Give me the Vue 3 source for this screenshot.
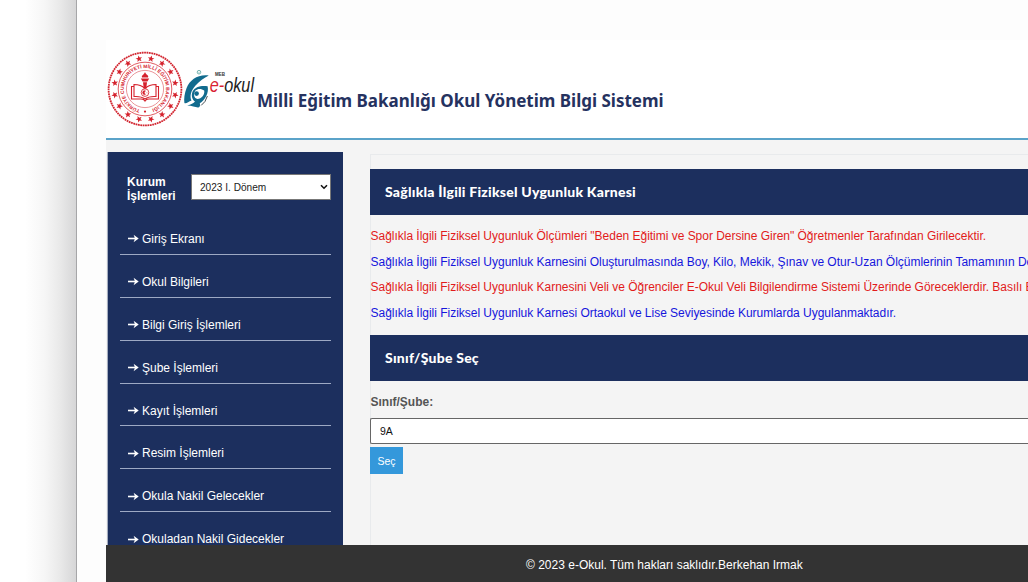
<script setup>
const menu = ['Giriş Ekranı', 'Okul Bilgileri', 'Bilgi Giriş İşlemleri', 'Şube İşlemleri', 'Kayıt İşlemleri', 'Resim İşlemleri', 'Okula Nakil Gelecekler', 'Okuladan Nakil Gidecekler']
const notes = [
  'Sağlıkla İlgili Fiziksel Uygunluk Ölçümleri "Beden Eğitimi ve Spor Dersine Giren" Öğretmenler Tarafından Girilecektir.',
  'Sağlıkla İlgili Fiziksel Uygunluk Karnesini Oluşturulmasında Boy, Kilo, Mekik, Şınav ve Otur-Uzan Ölçümlerinin Tamamının De',
  'Sağlıkla İlgili Fiziksel Uygunluk Karnesini Veli ve Öğrenciler E-Okul Veli Bilgilendirme Sistemi Üzerinde Göreceklerdir. Basılı E',
  'Sağlıkla İlgili Fiziksel Uygunluk Karnesi Ortaokul ve Lise Seviyesinde Kurumlarda Uygulanmaktadır.'
]
const stars = Array.from({ length: 16 }, (_, i) => i * 22.5 + 11.25)
</script>

<template>
  <div class="screen">
    <div class="shade"></div>
    <div class="frame">
      <div class="page">
        <header class="header">
          <svg class="seal" width="76" height="76" viewBox="-38 -38 76 76">
            <circle r="36.4" fill="#fff" stroke="#d22630" stroke-width="1.8" stroke-dasharray="1.8 .6" />
            <circle r="26.8" fill="none" stroke="#dc4850" stroke-width=".9" />
            <circle r="18.6" fill="none" stroke="#e0696f" stroke-width=".7" />
            <polygon v-for="a in stars" :key="a" :transform="`rotate(${a}) translate(0 -30.8)`" points="0,-3.4 .9,-1.1 3.3,-1 1.4,.5 2.1,2.8 0,1.5 -2.1,2.8 -1.4,.5 -3.3,-1 -.9,-1.1" fill="#d5222d" />
            <defs><path id="ring" d="M-5,20.5 A21.1,21.1 0 1 1 5,20.5" /></defs>
            <text class="ring"><textPath href="#ring" textLength="120">TÜRKİYE CUMHURİYETİ MİLLÎ EĞİTİM BAKANLIĞI</textPath></text>
            <circle cy="22.6" r="1.1" fill="#d5222d" />
            <g fill="#fff" stroke="#d5222d" stroke-width="1.1">
              <path d="M-13.5,-2.5 L-9,-2.5 Q-3,-2.5 0,0 Q3,-2.5 9,-2.5 L13.5,-2.5 V10 H4 Q1,10 0,12 Q-1,10 -4,10 H-13.5 Z" />
              <path d="M-11,-4.5 Q-4,-4.5 0,-.5 Q4,-4.5 11,-4.5 V7.5 Q4,7 0,10 Q-4,7 -11,7.5 Z" />
            </g>
            <path d="M-4.2,-10.5 H4.2 L2.4,-7.5 H-2.4 Z M-2,-6.7 H2 L1.2,0 H-1.2 Z" fill="#d5222d" />
            <path d="M0,-17 C-1,-14 -3.7,-14 -3,-11.5 H3 C4.2,-14 .8,-14 0,-17 Z" fill="#d5222d" />
            <circle cy="3.6" r="3.8" fill="#fff" stroke="#d5222d" stroke-width=".8" /><path d="M.6,1.9 A2,2 0 1 0 .6,5.3 A1.8,1.8 0 0 1 .6,1.9 M1.8,3 L2.1,4.4" fill="#d5222d" stroke="#d5222d" stroke-width=".4" />
          </svg>
          <svg class="eokul" width="74" height="42" viewBox="0 0 74 42">
            <circle cx="15" cy="4.2" r="1.8" fill="none" stroke="#65aaa6" stroke-width=".9" /><circle cx="15" cy="4.2" r=".5" fill="#65aaa6" />
            <path d="M24.8,7.4 C14,6 6,11.5 2.6,20 C.5,25.5 -.2,31 .4,35 C2,36.2 4.5,33.6 7.5,32.6 C5.4,28 7,22.5 11.5,17.4 C15.5,13 20,10 24.8,7.4 Z" fill="#116b8e" />
            <path d="M8.6,23.5 C11,18.8 17,17.2 23.6,18.2 C25.2,25 21,32 15.8,35.2 C16.6,37.6 15.6,39.4 14,39.4 C11,39.4 8,37.6 3.2,37.6 C7,36.8 9.6,35.2 11,33.6 C8,31.6 7,27.4 8.6,23.5 Z M11.4,22.6 C9,26.5 10,30.6 13.4,31 C17.6,31 21,26.8 20.2,22.6 C17.6,20.4 13.4,20.4 11.4,22.6 Z" fill="#116b8e" fill-rule="evenodd" />
            <circle cx="12.6" cy="25.6" r="2.3" fill="#116b8e" />
            <path d="M17.2,37.4 Q21.6,34.4 23.4,28" stroke="#303a40" fill="none" stroke-width=".9" />
            <text x="31" y="8" class="meb">MEB</text>
            <text x="25.8" y="24.4" class="word" textLength="44.2" lengthAdjust="spacingAndGlyphs"><tspan class="red">e-</tspan>okul</text>
          </svg>
          <h1 class="title">Milli Eğitim Bakanlığı Okul Yönetim Bilgi Sistemi</h1>
        </header>
        <div class="body">
          <nav class="side">
            <div class="term">
              <b class="label">Kurum İşlemleri</b>
              <div class="select"><span>2023 I. Dönem</span>
                <svg width="8" height="6" viewBox="0 0 8 6"><path d="M1 1.2 L4 4.2 L7 1.2" fill="none" stroke="#111" stroke-width="1.6" /></svg>
              </div>
            </div>
            <ul class="menu">
              <li v-for="m in menu" :key="m">
                <svg width="11" height="9" viewBox="0 0 11 9"><path d="M0 4.5 H8.5" stroke="#fff" stroke-width="1.6" /><path d="M5.6 .8 L10.7 4.5 L5.6 8.2 L7 4.5 Z" fill="#fff" /></svg>
                <span>{{ m }}</span>
              </li>
            </ul>
          </nav>
          <main class="main">
            <h2 class="bar">Sağlıkla İlgili Fiziksel Uygunluk Karnesi</h2>
            <div class="notes"><p v-for="n in notes" :key="n">{{ n }}</p></div>
            <h2 class="bar">Sınıf/Şube Seç</h2>
            <div class="field-label">Sınıf/Şube:</div>
            <div class="field">9A</div>
            <button class="btn">Seç</button>
          </main>
        </div>
        <footer class="footer">© 2023 e-Okul. Tüm hakları saklıdır.Berkehan Irmak</footer>
      </div>
    </div>
  </div>
</template>

<style>
body { margin: 0; overflow: hidden; }
</style>
<style scoped>
* { box-sizing: border-box; }
.screen { width: 1028px; height: 582px; display: flex; overflow: hidden; background: #fff; font-family: "Liberation Sans", Arial, sans-serif; }
.shade { flex: 0 0 76px; background: linear-gradient(90deg, #fff 25px, #f6f6f6 45px, #e9e9e9 60px, #d6d6d7 76px); }
.frame { flex: 1; min-width: 0; border-left: 1px solid #a6a6a8; background: #fdfdfd; padding: 40px 0 0 29px; }
.page { height: 542px; display: flex; flex-direction: column; background: #f4f4f4; overflow: hidden; }
.header { flex: 0 0 100px; background: #fff; border-bottom: 2px solid #5ba3c9; display: flex; align-items: flex-start; }
.seal { flex: none; margin: 11px 0 0 1px; }
.eokul { flex: none; margin: 28px 0 0 1px; overflow: visible; }
.ring { font: bold 4.9px "Liberation Sans", sans-serif; fill: #d5222d; }
.meb { font: bold 4.5px "Liberation Sans", sans-serif; fill: #333; }
.word { font: italic 20.5px "Liberation Sans", sans-serif; fill: #222; }
.red { fill: #d91f32; }
.title { margin: 48px 0 0 -1px; font: bold 17px/25px "Noto Sans", sans-serif; color: #25325f; white-space: nowrap; }
.body { flex: 1; min-height: 0; display: flex; overflow: hidden; }
.side { flex: 0 0 235px; margin: 12px 27px 0 2px; background: #1c2f5e; padding: 22px 12px 0; box-shadow: -1px 0 #a5adbf; }
.term { height: 38px; display: flex; justify-content: space-between; padding-left: 7px; }
.label { width: 56px; color: #fff; font-size: 12px; line-height: 14px; padding-top: 1px; }
.select { width: 140px; height: 26px; background: #fff; border: 1px solid #777; padding: 0 2px 0 8px; display: flex; align-items: center; justify-content: space-between; font-size: 10.1px; color: #222; }
.menu { list-style: none; margin: 0; padding: 0; }
.menu li { height: 42.9px; border-bottom: 1px solid #9da9c4; display: flex; align-items: center; gap: 3px; padding: 12px 0 0 8px; color: #fff; font-size: 12px; white-space: nowrap; }
.main { flex: 1; min-width: 0; margin-top: 14px; border: solid #e8eaec; border-width: 1px 0 0 1px; padding-top: 14px; white-space: nowrap; }
.bar { height: 46px; margin: 0 0 0 -1px; background: #1c2f5e; color: #fff; padding-left: 15px; font: 900 14px/46px Lato, sans-serif; letter-spacing: .24px; }
.notes { padding-top: 9px; height: 120px; }
.notes p { margin: 0 0 0 -.5px; font-size: 12px; letter-spacing: -.02px; line-height: 25.7px; color: #e21b1b; }
.notes p:nth-child(even) { color: #1616dc; }
.field-label { padding-top: 14px; height: 37px; font: bold 12px/14px "Liberation Sans", sans-serif; color: #555; margin-left: -.5px; }
.field { margin-left: -1px; height: 26px; border: 1px solid #666; border-right: 0; border-radius: 2px 0 0 2px; background: #fff; padding-left: 9px; font-size: 10.5px; line-height: 24px; color: #111; }
.btn { display: block; margin: 3px 0 0 -1px; width: 33px; height: 27px; border: 0; padding: 0; background: #3498db; color: #fff; font: 10.5px "Liberation Sans", sans-serif; }
.footer { flex: 0 0 37px; background: #333; color: #fff; font-size: 12px; line-height: 34px; padding: 3px 0 0 420px; white-space: nowrap; }
</style>
